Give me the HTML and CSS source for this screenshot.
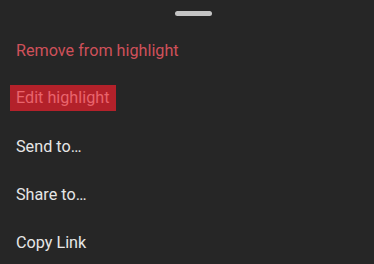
FILE: index.html
```html
<!DOCTYPE html>
<html>
<head>
<meta charset="utf-8">
<link rel="stylesheet" href="styles.css">
</head>
<body>
<div class="sheet">
  <div class="handle"></div>
  <div class="menu">
    <div class="item danger">Remove from highlight</div>
    <div class="item"><span class="selected">Edit highlight</span></div>
    <div class="item">Send to…</div>
    <div class="item">Share to…</div>
    <div class="item">Copy Link</div>
  </div>
</div>
</body>
</html>
```
FILE: styles.css
```css
html, body {
  margin: 0;
  padding: 0;
  background: #262626;
}
.sheet {
  width: 374px;
  height: 264px;
  overflow: hidden;
  background: #262626;
  font-family: Roboto, "Noto Sans", sans-serif;
  font-size: 16.2px;
  color: #e6e6e6;
  padding-top: 11px;
  box-sizing: border-box;
}
.handle {
  width: 37px;
  height: 5px;
  border-radius: 3px;
  background: #c4c4c4;
  margin-left: 175px;
}
.menu {
  margin-top: 10px;
  display: flex;
  flex-direction: column;
}
.item {
  height: 48px;
  padding-left: 16px;
  display: flex;
  align-items: center;
}
.danger {
  color: #cf515a;
}
.selected {
  background: #b3212a;
  color: #e9646c;
  line-height: 26px;
  padding: 0 7px 0 6px;
  margin-left: -6px;
}
```
